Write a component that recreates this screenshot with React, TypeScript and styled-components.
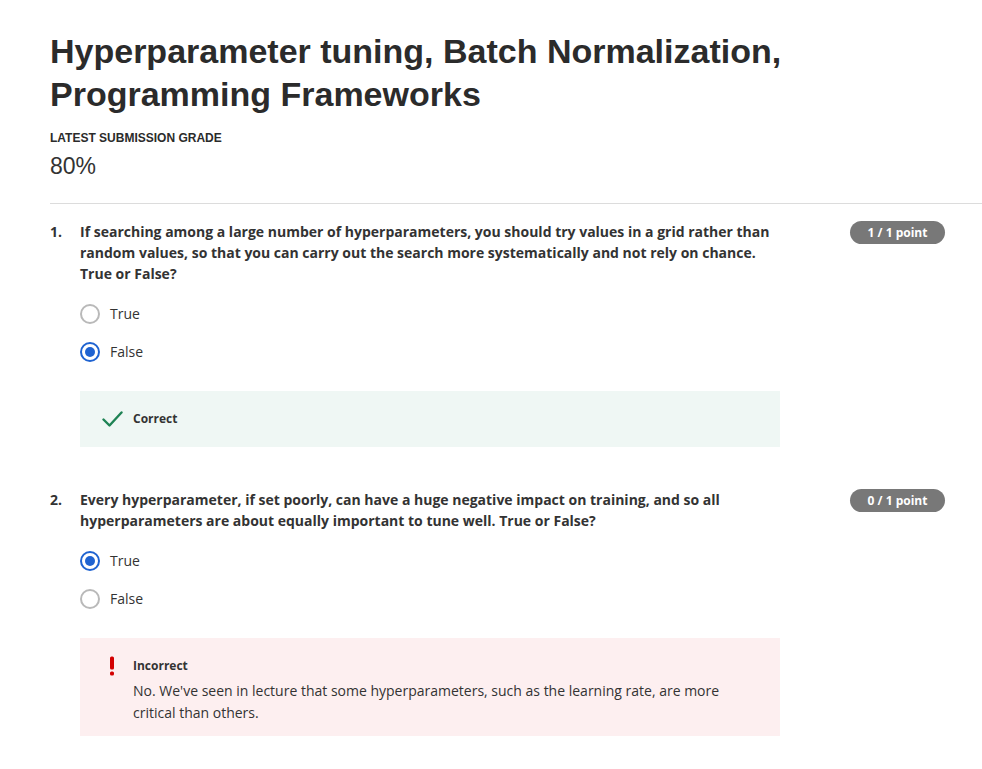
import React from 'react';
import styled, { createGlobalStyle } from 'styled-components';

const GlobalStyle = createGlobalStyle`
  body {
    margin: 0;
    background: #ffffff;
    font-family: 'Open Sans', 'Liberation Sans', sans-serif;
    color: #333333;
  }
`;

type Option = { label: string; checked: boolean };

type Question = {
  number: number;
  text: string;
  points: string;
  options: Option[];
  correct: boolean;
  explanation?: string;
};

const questions: Question[] = [
  {
    number: 1,
    text: 'If searching among a large number of hyperparameters, you should try values in a grid rather than random values, so that you can carry out the search more systematically and not rely on chance. True or False?',
    points: '1 / 1 point',
    options: [
      { label: 'True', checked: false },
      { label: 'False', checked: true },
    ],
    correct: true,
  },
  {
    number: 2,
    text: 'Every hyperparameter, if set poorly, can have a huge negative impact on training, and so all hyperparameters are about equally important to tune well. True or False?',
    points: '0 / 1 point',
    options: [
      { label: 'True', checked: true },
      { label: 'False', checked: false },
    ],
    correct: false,
    explanation:
      "No. We've seen in lecture that some hyperparameters, such as the learning rate, are more critical than others.",
  },
];

const CheckIcon = () => (
  <svg width="21" height="16" viewBox="0 0 21 16" fill="none">
    <path d="M1.5 8.5 L7.5 14.5 L19.5 1.5" stroke="#1f8354" strokeWidth="2.4" strokeLinecap="round" strokeLinejoin="round" />
  </svg>
);

const AlertIcon = () => (
  <svg width="8" height="20" viewBox="0 0 8 20">
    <rect x="2" y="0.5" width="4" height="13" rx="1.5" fill="#d30001" />
    <rect x="2" y="15.5" width="4" height="4" rx="1.5" fill="#d30001" />
  </svg>
);

const App = () => {
  return (
    <>
      <GlobalStyle />
      <Page>
        <Header>
          <Title>Hyperparameter tuning, Batch Normalization, Programming Frameworks</Title>
          <GradeLabel>Latest Submission Grade</GradeLabel>
          <GradeValue>80%</GradeValue>
        </Header>
        <Divider />
        <QuestionList>
          {questions.map((q) => (
            <QuestionRow key={q.number}>
              <Number>{q.number}.</Number>
              <QuestionBody>
                <Prompt>{q.text}</Prompt>
                <Options>
                  {q.options.map((o) => (
                    <OptionRow key={o.label}>
                      <Radio checked={o.checked} />
                      <OptionLabel>{o.label}</OptionLabel>
                    </OptionRow>
                  ))}
                </Options>
                <Feedback correct={q.correct}>
                  <FeedbackIcon>{q.correct ? <CheckIcon /> : <AlertIcon />}</FeedbackIcon>
                  <FeedbackText>
                    <FeedbackTitle>{q.correct ? 'Correct' : 'Incorrect'}</FeedbackTitle>
                    {q.explanation && <Explanation>{q.explanation}</Explanation>}
                  </FeedbackText>
                </Feedback>
              </QuestionBody>
              <Badge>{q.points}</Badge>
            </QuestionRow>
          ))}
        </QuestionList>
      </Page>
    </>
  );
};

// css styles
const Page = styled.div`
  padding: 30px 0 40px 50px;
`;

const Header = styled.div`
  display: flex;
  flex-direction: column;
`;

const Title = styled.h1`
  margin: 0;
  width: 760px;
  font-family: 'Liberation Sans', Arial, sans-serif;
  font-size: 34px;
  line-height: 43px;
  font-weight: 700;
  color: #2b2b2b;
`;

const GradeLabel = styled.div`
  margin-top: 14px;
  font-family: 'Liberation Sans', Arial, sans-serif;
  font-size: 12px;
  line-height: 16px;
  font-weight: 700;
  text-transform: uppercase;
  color: #2b2b2b;
`;

const GradeValue = styled.div`
  margin-top: 5px;
  font-family: 'Liberation Sans', Arial, sans-serif;
  font-size: 23px;
  line-height: 30px;
  color: #333333;
`;

const Divider = styled.hr`
  margin: 22px 0 0 0;
  border: 0;
  border-top: 1px solid #dcdcdc;
`;

const QuestionList = styled.div`
  display: flex;
  flex-direction: column;
  gap: 42px;
  padding-top: 17px;
`;

const QuestionRow = styled.div`
  display: flex;
  align-items: flex-start;
`;

const Number = styled.div`
  width: 30px;
  flex-shrink: 0;
  font-size: 14px;
  line-height: 21px;
  font-weight: 700;
  color: #333333;
`;

const QuestionBody = styled.div`
  width: 700px;
  flex-shrink: 0;
  display: flex;
  flex-direction: column;
`;

const Prompt = styled.div`
  font-size: 14px;
  line-height: 21px;
  font-weight: 700;
  color: #333333;
`;

const Options = styled.div`
  display: flex;
  flex-direction: column;
  gap: 18px;
  margin-top: 20px;
`;

const OptionRow = styled.label`
  display: flex;
  align-items: center;
  gap: 10px;
  height: 20px;
`;

const Radio = styled.span<{ checked: boolean }>`
  width: 20px;
  height: 20px;
  flex-shrink: 0;
  box-sizing: border-box;
  border-radius: 50%;
  border: 2px solid ${(props) => (props.checked ? '#1f63d1' : '#b9b9b9')};
  display: flex;
  align-items: center;
  justify-content: center;
  &::after {
    content: '';
    display: ${(props) => (props.checked ? 'block' : 'none')};
    width: 10px;
    height: 10px;
    border-radius: 50%;
    background: #1f63d1;
  }
`;

const OptionLabel = styled.span`
  font-size: 14px;
  line-height: 20px;
  color: #333333;
`;

const Feedback = styled.div<{ correct: boolean }>`
  margin-top: 29px;
  display: flex;
  align-items: flex-start;
  gap: 11px;
  padding: 19px 20px ${(props) => (props.correct ? '19px' : '12px')} 22px;
  background: ${(props) => (props.correct ? '#eff7f4' : '#fdeff0')};
`;

const FeedbackIcon = styled.div`
  width: 20px;
  height: 18px;
  flex-shrink: 0;
  display: flex;
  align-items: center;
  justify-content: center;
  svg {
    flex-shrink: 0;
  }
`;

const FeedbackText = styled.div`
  display: flex;
  flex-direction: column;
  gap: 5px;
`;

const FeedbackTitle = styled.div`
  font-size: 12px;
  line-height: 18px;
  font-weight: 700;
  color: #333333;
`;

const Explanation = styled.div`
  font-size: 14px;
  line-height: 22px;
  color: #333333;
`;

const Badge = styled.div`
  margin-left: 70px;
  width: 95px;
  height: 23px;
  flex-shrink: 0;
  border-radius: 12px;
  background: #787878;
  color: #ffffff;
  font-size: 12px;
  font-weight: 700;
  display: flex;
  align-items: center;
  justify-content: center;
`;

export default App;
